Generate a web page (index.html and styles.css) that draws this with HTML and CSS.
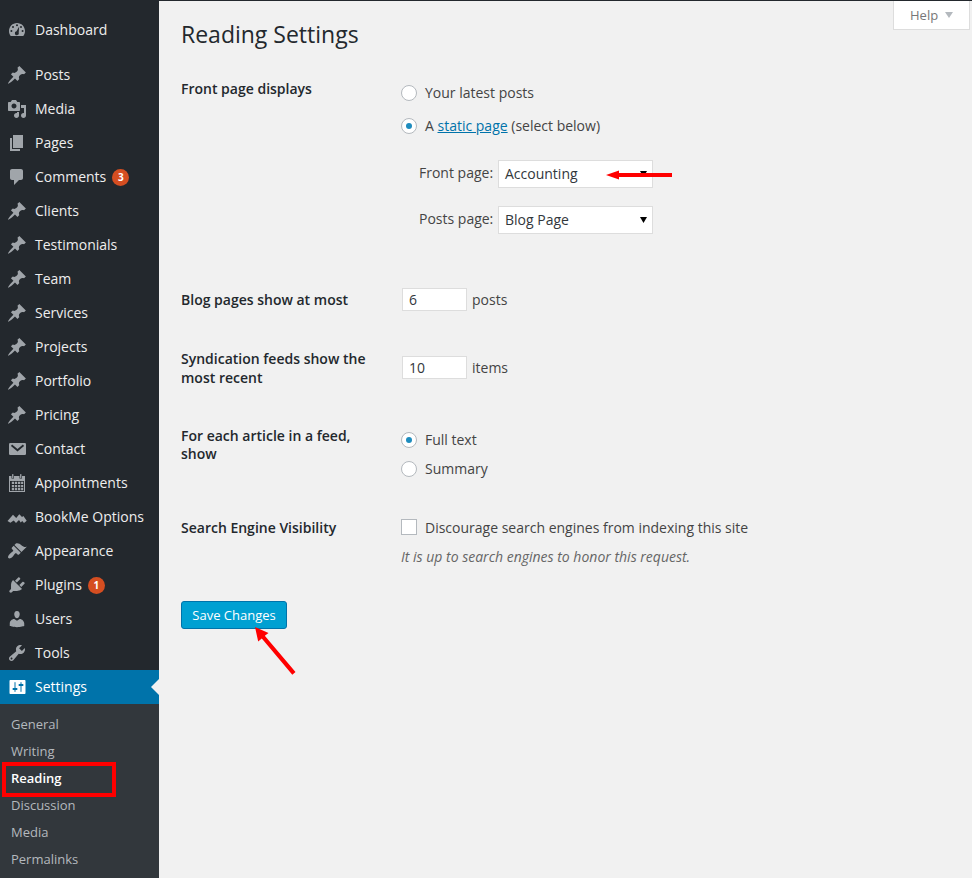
FILE: index.html
```html
<!DOCTYPE html>
<html lang="en">
<head>
<meta charset="utf-8">
<title>Reading Settings</title>
<link rel="stylesheet" href="styles.css">
</head>
<body>
<svg class="sprite" aria-hidden="true">
  <symbol id="pin" viewBox="0.3 0.3 19.4 19.4"><path d="M10.44 3.02l1.82-1.82 6.36 6.35-1.83 1.82c-1.05-.68-2.48-.57-3.41.36l-.75.75c-.92.93-1.04 2.35-.35 3.41l-1.83 1.82-2.41-2.41-2.8 2.79c-.42.42-3.38 2.71-3.8 2.29s1.86-3.39 2.28-3.81l2.79-2.79L4.1 9.36l1.83-1.82c1.05.69 2.48.57 3.4-.36l.75-.75c.93-.92 1.05-2.35.36-3.41z"/></symbol>
</svg>
<div class="layout">
  <nav class="sidebar">
    <ul class="menu">
      <li class="item first"><svg class="icon" viewBox="0 1 20 20"><path fill-rule="evenodd" d="M3.76 17h12.48c1.1-1.37 1.76-3.11 1.76-5 0-4.42-3.58-8-8-8s-8 3.58-8 8c0 1.89.66 3.63 1.76 5zM10 5.2a1 1 0 1 1 0 2 1 1 0 0 1 0-2zM6 7a1 1 0 1 1 0 2 1 1 0 0 1 0-2zM14 7a1 1 0 1 1 0 2 1 1 0 0 1 0-2zM4.4 11a1 1 0 1 1 0 2 1 1 0 0 1 0-2zM15.6 11a1 1 0 1 1 0 2 1 1 0 0 1 0-2zM12.2 7.6l-.5 5.8a2 2 0 1 1-2.2-1.2z"/></svg><span>Dashboard</span></li>
      <li class="item"><svg class="icon"><use href="#pin"/></svg><span>Posts</span></li>
      <li class="item"><svg class="icon" viewBox="0 0 20 20"><path d="M13 11V4c0-.55-.45-1-1-1h-1.67L9 1H5L3.67 3H2c-.55 0-1 .45-1 1v7c0 .55.45 1 1 1h10c.55 0 1-.45 1-1zM7 4.5c1.38 0 2.5 1.12 2.5 2.5S8.38 9.5 7 9.5 4.5 8.38 4.5 7 5.62 4.5 7 4.5zM14 6h5v10.5c0 1.38-1.12 2.5-2.5 2.5S14 17.88 14 16.5s1.12-2.5 2.5-2.5c.17 0 .34.02.5.05V9h-3V6zm-4 8.05V13h2v3.5c0 1.38-1.12 2.5-2.5 2.5S7 17.88 7 16.5 8.12 14 9.5 14c.17 0 .34.02.5.05z"/></svg><span>Media</span></li>
      <li class="item"><svg class="icon" viewBox="0 0 20 20"><path d="M6 15V2h10v13H6zm-1 1h8v2H3V5h2v11z"/></svg><span>Pages</span></li>
      <li class="item"><svg class="icon" viewBox="0 0 20 20"><path d="M5 2h9c1.1 0 2 .9 2 2v7c0 1.1-.9 2-2 2h-2l-5 5v-5H5c-1.1 0-2-.9-2-2V4c0-1.1.9-2 2-2z"/></svg><span>Comments</span><b class="count">3</b></li>
      <li class="item"><svg class="icon"><use href="#pin"/></svg><span>Clients</span></li>
      <li class="item"><svg class="icon"><use href="#pin"/></svg><span>Testimonials</span></li>
      <li class="item"><svg class="icon"><use href="#pin"/></svg><span>Team</span></li>
      <li class="item"><svg class="icon"><use href="#pin"/></svg><span>Services</span></li>
      <li class="item"><svg class="icon"><use href="#pin"/></svg><span>Projects</span></li>
      <li class="item"><svg class="icon"><use href="#pin"/></svg><span>Portfolio</span></li>
      <li class="item"><svg class="icon"><use href="#pin"/></svg><span>Pricing</span></li>
      <li class="item"><svg class="icon" viewBox="0 0 20 20"><rect x="2" y="4" width="17" height="12" rx="1.2"/><path class="cut-line" d="M4.5 6.3l6 5 6-5"/></svg><span>Contact</span></li>
      <li class="item"><svg class="icon" viewBox="0 0 20 20"><path fill-rule="evenodd" d="M2 3h2.500v2.500h2.500V3h5.500v2.500H15V3h3v16H2zM3 8v10h14V8z"/><path d="M4.800 8.800h2.300v2.300H4.800zM7.900 8.800h2.300v2.300H7.900zM11 8.800h2.300v2.300H11zM14.100 8.800h2.100v2.300h-2.100zM4.800 11.900h2.300v2.300H4.800zM7.900 11.900h2.300v2.300H7.900zM11 11.900h2.300v2.300H11zM14.100 11.900h2.100v2.300h-2.100zM4.800 15h2.300v2.200H4.800zM7.900 15h2.300v2.200H7.900zM11 15h2.300v2.200H11zM14.100 15h2.100v2.200h-2.100z"/><rect x="5.100" y="1" width="1.300" height="4" rx=".6"/><rect x="13.100" y="1" width="1.300" height="4" rx=".6"/></svg><span>Appointments</span></li>
      <li class="item"><svg class="icon" viewBox="0 -0.7 20 20"><path d="M.5 13.200L6 7l3.200 3.400L12.300 6.500l2.700 2.800 1.400-1 3.300 4.800-2.700 2.200-1.800-2-1.500 1.400-1.700-2.300-3 3-2.300-2.700-3.300 2.400z"/></svg><span>BookMe Options</span></li>
      <li class="item"><svg class="icon" viewBox="0 0 20 20"><path d="M14.480 11.060L7.410 3.990l1.500-1.500c.5-.56 2.300-.47 3.510.32 1.210.8 1.430 1.280 2.910 2.100 1.180.64 2.450 1.260 4.450.85zm-.71.71L6.700 4.700 4.930 6.470c-.39.39-.39 1.020 0 1.410l1.060 1.060c.39.39.39 1.030 0 1.420-.6.6-1.430 1.110-2.210 1.690-.35.26-.7.53-1.010.84C1.430 14.230.4 16.080 1.400 17.070c.99 1 2.840-.03 4.180-1.360.31-.31.58-.66.85-1.020.57-.78 1.080-1.610 1.690-2.210.39-.39 1.020-.39 1.410 0l1.060 1.060c.39.39 1.020.39 1.410 0z"/></svg><span>Appearance</span></li>
      <li class="item"><svg class="icon" viewBox="0 0 20 20"><path d="M13.110 4.360L9.870 7.600 8 5.730l3.240-3.240c.35-.34 1.050-.2 1.560.32.52.51.66 1.210.31 1.550zm-8 1.770l.91-1.120 9.010 9.010-1.190.84c-.71.71-2.630 1.160-3.820 1.160H6.140L4.900 17.260c-.59.59-1.540.59-2.120 0-.59-.58-.59-1.530 0-2.120l1.240-1.240v-3.880c0-1.130.4-3.190 1.090-3.890zm7.260 3.970l3.240-3.240c.34-.35 1.040-.21 1.550.31.52.51.66 1.210.31 1.550l-3.240 3.250z"/></svg><span>Plugins</span><b class="count">1</b></li>
      <li class="item"><svg class="icon" viewBox="0 0 20 20"><path d="M10 9.250c-2.270 0-2.730-3.440-2.730-3.440C7 4.020 7.820 2 9.970 2c2.160 0 2.980 2.020 2.710 3.810 0 0-.41 3.440-2.680 3.440zm0 2.570L12.720 10c2.390 0 4.520 2.330 4.520 4.530v2.490s-3.650 1.130-7.240 1.130c-3.650 0-7.240-1.130-7.240-1.130v-2.490c0-2.250 1.940-4.480 4.470-4.480z"/></svg><span>Users</span></li>
      <li class="item"><svg class="icon" viewBox="0 0 20 20"><path d="M16.680 9.770c-1.340 1.340-3.300 1.670-4.950.99l-5.410 6.520c-.99.99-2.590.99-3.580 0s-.99-2.590 0-3.570l6.520-5.420c-.68-1.650-.35-3.610.99-4.950 1.280-1.280 3.120-1.620 4.720-1.060l-2.890 2.890 2.820 2.820 2.860-2.870c.53 1.580.18 3.390-1.080 4.650zM3.810 16.210c.4.39 1.040.39 1.430 0 .4-.4.4-1.040 0-1.430-.39-.4-1.030-.4-1.430 0-.39.39-.39 1.030 0 1.430z"/></svg><span>Tools</span></li>
      <li class="item current"><svg class="icon" viewBox="-0.500 0 20 20"><path d="M18 16V4c0-.55-.45-1-1-1H3c-.55 0-1 .45-1 1v12c0 .55.45 1 1 1h14c.55 0 1-.45 1-1zM8 11h1c.55 0 1 .45 1 1s-.45 1-1 1H8v1.500c0 .28-.22.5-.5.5s-.5-.22-.5-.5V13H6c-.55 0-1-.45-1-1s.45-1 1-1h1V5.500c0-.28.22-.5.5-.5s.5.22.5.5V11zm5-2h-1c-.55 0-1-.45-1-1s.45-1 1-1h1V5.500c0-.28.22-.5.5-.5s.5.22.5.5V7h1c.55 0 1 .45 1 1s-.45 1-1 1h-1v5.500c0 .28-.22.5-.5.5s-.5-.22-.5-.5V9z"/></svg><span>Settings</span></li>
    </ul>
    <ul class="submenu">
      <li>General</li>
      <li>Writing</li>
      <li class="active">Reading</li>
      <li>Discussion</li>
      <li>Media</li>
      <li>Permalinks</li>
    </ul>
  </nav>
  <main class="content">
    <div class="help">Help<span class="caret"></span></div>
    <h1>Reading Settings</h1>
    <form class="form">
      <div class="row front">
        <div class="label">Front page displays</div>
        <div class="field">
          <label class="choice"><span class="radio"></span>Your latest posts</label>
          <label class="choice"><span class="radio on"></span><span>A <a>static page</a> (select below)</span></label>
          <div class="pickers">
            <div class="picker"><span class="name">Front page:</span><span class="select">Accounting<svg class="down" viewBox="0 0 7 6"><path d="M0 0h7L3.500 6z"/></svg><svg class="arrow-left" viewBox="0 0 66 10"><path d="M0 5L13 .5V3h53v4H13v2.500z"/></svg></span></div>
            <div class="picker"><span class="name">Posts page:</span><span class="select">Blog Page<svg class="down" viewBox="0 0 7 6"><path d="M0 0h7L3.500 6z"/></svg></span></div>
          </div>
        </div>
      </div>
      <div class="row blog">
        <div class="label">Blog pages show at most</div>
        <div class="field amount"><span class="number">6</span>posts</div>
      </div>
      <div class="row feeds">
        <div class="label">Syndication feeds show the<br>most recent</div>
        <div class="field amount"><span class="number">10</span>items</div>
      </div>
      <div class="row article">
        <div class="label">For each article in a feed,<br>show</div>
        <div class="field">
          <label class="choice"><span class="radio on"></span>Full text</label>
          <label class="choice"><span class="radio"></span>Summary</label>
        </div>
      </div>
      <div class="row search">
        <div class="label">Search Engine Visibility</div>
        <div class="field">
          <label class="choice"><span class="checkbox"></span>Discourage search engines from indexing this site</label>
          <p class="note">It is up to search engines to honor this request.</p>
        </div>
      </div>
      <div class="save">Save Changes<svg class="arrow-up" viewBox="0 0 42 48"><path d="M0 0l13.500 6-3.700 2.800L40.500 45l-3.200 2.800L6.800 11.600 3.200 14.500z"/></svg></div>
    </form>
  </main>
</div>
</body>
</html>
```
FILE: styles.css
```css
*, *::before, *::after { box-sizing: border-box; }
body {
  margin: 0;
  background: #f1f1f1;
  color: #444;
  font: 14px/19px "Open Sans", sans-serif;
}
ul { margin: 0; padding: 0; list-style: none; }
.sprite { display: none; }
.layout { display: flex; height: 878px; overflow: hidden; }

.sidebar { width: 159px; flex: none; background: #23282d; display: flex; flex-direction: column; }
.menu { padding-top: 13px; }
.item {
  display: flex;
  align-items: center;
  height: 34px;
  padding-left: 7px;
  color: #eee;
  position: relative;
  white-space: nowrap;
}
.item.first { margin-bottom: 11px; }
.item span { padding-bottom: 2px; }
.icon { width: 20px; height: 20px; margin-right: 8px; flex: none; fill: #a0a5aa; }
.cut-line { fill: none; stroke: #23282d; stroke-width: 1.8; }
.count {
  width: 17px;
  height: 17px;
  margin-left: 6px;
  border-radius: 50%;
  background: #d54e21;
  color: #fff;
  font-size: 10px;
  font-weight: 700;
  line-height: 17px;
  text-align: center;
}
.current { background: #0073aa; color: #fff; }
.current .icon { fill: #fff; }
.current::after {
  content: "";
  position: absolute;
  right: 0;
  top: 9px;
  border: 8px solid transparent;
  border-left: 0;
  border-right-color: #f1f1f1;
}
.submenu { flex: 1; padding-top: 7px; background: #32373c; color: #b4b9be; font-size: 13px; line-height: 27px; }
.submenu li { height: 27px; padding-left: 11px; position: relative; }
.submenu .active { color: #fff; font-weight: 600; }
.submenu .active::after {
  content: "";
  position: absolute;
  left: 2px;
  top: -3px;
  width: 114px;
  height: 35px;
  border: 4px solid #f00;
}

.content { flex: 1; padding-left: 22px; border-top: 1px solid #23282d; position: relative; }
.help {
  position: absolute;
  right: 2px;
  top: 0;
  width: 77px;
  height: 29px;
  padding-left: 16px;
  display: flex;
  align-items: center;
  background: #fff;
  border: 1px solid #ddd;
  border-top: 0;
  color: #777;
  font-size: 13px;
}
.caret { margin-left: 7px; border: 4px solid transparent; border-top: 6px solid #b4b9be; border-bottom: 0; }
h1 { margin: 0; padding-top: 19px; height: 78px; color: #23282d; font-size: 23px; font-weight: 400; line-height: 29px; }

.row { display: flex; }
.label { width: 220px; padding-top: 1px; color: #23282d; font-weight: 600; line-height: 18.500px; }
.front { height: 209px; }
.front .field { padding-top: 4px; }
.choice { display: flex; align-items: center; height: 19px; }
.front .choice { margin-bottom: 14px; }
.radio, .checkbox {
  width: 16px;
  height: 16px;
  margin-right: 8px;
  border: 1px solid #b4b9be;
  background: #fff;
  display: flex;
  align-items: center;
  justify-content: center;
}
.radio { border-radius: 50%; }
.checkbox { margin-bottom: 1px; }
.on::before { content: ""; width: 6px; height: 6px; border-radius: 50%; background: #1e8cbe; }
a { color: #0073aa; text-decoration: underline; }
.pickers { display: flex; flex-direction: column; gap: 18px; padding: 11px 0 0 18px; }
.picker { display: flex; height: 28px; line-height: 26px; }
.name { width: 79px; }
.select {
  width: 155px;
  height: 28px;
  padding-left: 6px;
  border: 1px solid #ddd;
  background: #fff;
  color: #32373c;
  position: relative;
}
.down { position: absolute; right: 5px; top: 10px; width: 7px; height: 6px; fill: #000; }
.arrow-left { position: absolute; left: 107px; top: 9px; width: 66px; height: 10px; fill: #f00; }
.blog { height: 60px; }
.blog .label { padding-top: 3px; }
.blog .amount { margin-top: 0; }
.amount { display: flex; height: 23px; line-height: 23px; }
.number {
  width: 65px;
  height: 23px;
  margin: 0 5px 0 1px;
  padding-left: 6px;
  border: 1px solid #ddd;
  background: #fff;
  color: #32373c;
  line-height: 22px;
}
.feeds { height: 78px; padding-top: 2px; }
.feeds .label { padding-top: 0; }
.feeds .amount { margin-top: 6px; }
.article { height: 92px; }
.article .label { line-height: 18px; }
.article .field { padding-top: 4px; }
.article .choice + .choice { margin-top: 10px; }
.search { height: 83px; }
.note { margin: 10px 0 0; color: #666; font-style: italic; }
.save {
  width: 106px;
  height: 28px;
  border: 1px solid #0073aa;
  border-radius: 3px;
  background: #00a0d2;
  color: #fff;
  font-size: 13px;
  line-height: 26px;
  text-align: center;
  position: relative;
}
.arrow-up { position: absolute; left: 73px; top: 25px; width: 42px; height: 48px; fill: #f00; }
```
